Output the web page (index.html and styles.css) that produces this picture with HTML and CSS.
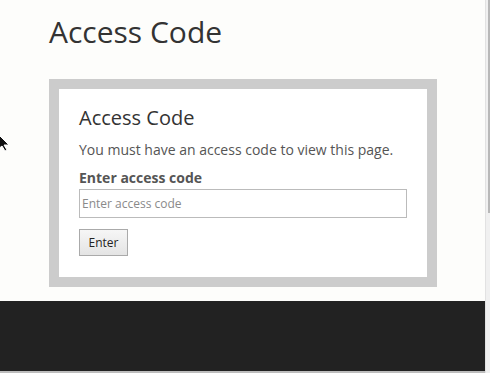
FILE: index.html
```html
<!DOCTYPE html>
<html lang="en">
<head>
  <meta charset="UTF-8" />
  <title>Access Code</title>
  <link rel="stylesheet" href="styles.css">
</head>
<body>
  <div class="viewport">
    <div class="main">
      <h1>Access Code</h1>
      <div class="code-box">
        <h2>Access Code</h2>
        <p>You must have an access code to view this page.</p>
        <form id="codeForm">
          <label for="code">Enter access code</label>
          <input id="code" type="text" placeholder="Enter access code">
          <button type="submit">Enter</button>
        </form>
      </div>
    </div>
    <footer class="footer"></footer>
    <div class="bottom-line"></div>
  </div>
  <div class="scrollbar"><div class="thumb"></div></div>

  <!-- mouse pointer, sits over the page -->
  <svg class="pointer" width="12" height="18" viewBox="0 0 12 18">
    <path d="M-3 0 L9 12 L4 12 L7 17 L5 18 L2 13 L-3 17 Z" fill="#111" stroke="#fff" stroke-width="1"/>
  </svg>
</body>
</html>
```

FILE: styles.css
```css
body {
  margin: 0;
  font-family: 'Open Sans', sans-serif;
  background: #fdfdfb;
  color: #333;
  overflow: hidden;
}
.viewport {
  width: 485px;
  height: 373px;
  display: flex;
  flex-direction: column;
}
.main {
  padding: 0 0 14px 49px;
}
h1 {
  font-size: 30px;
  font-weight: 400;
  margin: 9px 0 24px;
  line-height: 46px;
}
.code-box {
  width: 348px;
  border: 10px solid #cccccc;
  background: #fff;
  padding: 14px 0 21px 20px;
}
h2 {
  font-size: 20px;
  font-weight: 400;
  margin: 0 0 7px;
  line-height: 30px;
}
p {
  font-size: 14px;
  color: #555;
  margin: 0 0 8px;
  line-height: 20px;
}
label {
  display: block;
  font-size: 14px;
  font-weight: 700;
  color: #555;
  line-height: 20px;
  margin-bottom: 1px;
}
input {
  display: block;
  box-sizing: border-box;
  width: 328px;
  height: 29px;
  margin: 0;
  border: 1px solid #bbb;
  padding: 0 0 0 2px;
  font-family: 'Open Sans', sans-serif;
  font-size: 12px;
  color: #333;
  outline: none;
}
input::placeholder {
  color: #8a8a8a;
}
button {
  display: block;
  margin-top: 11px;
  width: 49px;
  height: 27px;
  font-family: 'Open Sans', sans-serif;
  font-size: 12px;
  color: #222;
  background: linear-gradient(#f6f6f6, #e4e4e4);
  border: 1px solid #aaa;
  border-radius: 0;
  padding: 0;
  cursor: pointer;
}
.footer {
  flex: 1;
  background: #222222;
}
.bottom-line {
  height: 2px;
  background: #bdbdbd;
}
.scrollbar {
  position: absolute;
  top: 0;
  right: 0;
  width: 5px;
  height: 373px;
  background: #f0f0f0;
  border-left: 1px solid #e2e2e2;
  box-sizing: border-box;
}
.thumb {
  margin-left: 2px;
  width: 2px;
  height: 213px;
  background: #b8b8b8;
}
.pointer {
  position: absolute;
  left: 0;
  top: 133px;
}
```
